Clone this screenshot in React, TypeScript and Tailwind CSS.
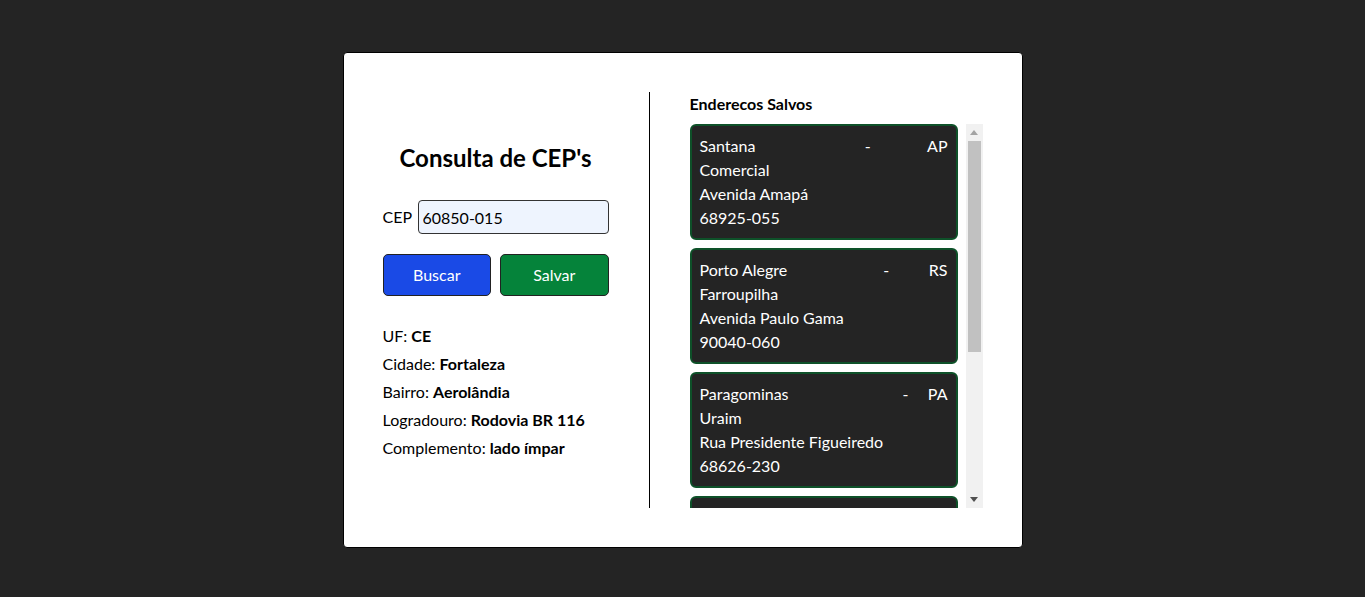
import React from "react";

type Endereco = { cidade: string; uf: string; bairro: string; logradouro: string; cep: string };

const enderecos: Endereco[] = [
  { cidade: "Santana", uf: "AP", bairro: "Comercial", logradouro: "Avenida Amapá", cep: "68925-055" },
  { cidade: "Porto Alegre", uf: "RS", bairro: "Farroupilha", logradouro: "Avenida Paulo Gama", cep: "90040-060" },
  { cidade: "Paragominas", uf: "PA", bairro: "Uraim", logradouro: "Rua Presidente Figueiredo", cep: "68626-230" },
];

function Card({ e }: { e: Endereco }) {
  return (
    <div className="shrink-0 bg-[#242424] border-2 border-[#0e5129] rounded-[6px] px-2 py-2 text-white text-[16px] leading-[24px]">
      <div className="grid grid-cols-[auto_auto_auto] justify-between">
        <span>{e.cidade}</span>
        <span>-</span>
        <span>{e.uf}</span>
        <span className="col-start-1">{e.bairro}</span>
        <span className="col-start-1">{e.logradouro}</span>
        <span className="col-start-1">{e.cep}</span>
      </div>
    </div>
  );
}

function Scrollbar() {
  return (
    <div className="w-[17px] h-full bg-[#f1f1f1] flex flex-col items-center">
      <div className="h-[17px] w-full flex items-center justify-center">
        <svg width="8" height="5" viewBox="0 0 8 5">
          <path d="M4 0 L8 5 L0 5 Z" fill="#a3a3a3" />
        </svg>
      </div>
      <div className="w-[13px] h-[211px] bg-[#c1c1c1]" />
      <div className="flex-1" />
      <div className="h-[17px] w-full flex items-center justify-center">
        <svg width="8" height="5" viewBox="0 0 8 5">
          <path d="M0 0 L8 0 L4 5 Z" fill="#505050" />
        </svg>
      </div>
    </div>
  );
}

export default function App() {
  return (
    <div
      className="min-h-screen bg-[#242424] flex justify-center pt-[52px]"
      style={{ fontFamily: "Lato, 'Noto Sans', sans-serif" }}
    >
      <div className="w-[680px] h-[496px] bg-white border border-black rounded-[4px] p-[39px] flex text-black">
        <div className="w-[226px] flex flex-col justify-center pt-[4px]">
          <h1 className="text-[24px] leading-[32px] font-bold text-center">Consulta de CEP's</h1>
          <div className="mt-[26px] flex items-center">
            <label className="text-[16px]">CEP</label>
            <input
              readOnly
              value="60850-015"
              className="ml-auto w-[191px] h-[34px] bg-[#eef4fe] border border-[#333] rounded-[4px] px-1 text-[16px] text-black outline-none"
              style={{ fontFamily: "Lato, 'Noto Sans', sans-serif" }}
            />
          </div>
          <div className="mt-5 flex gap-[9px]">
            <button className="flex-1 h-[42px] bg-[#1a4ae6] border border-[#222] rounded-[5px] text-white text-[16px]">
              Buscar
            </button>
            <button className="flex-1 h-[42px] bg-[#05833a] border border-[#222] rounded-[5px] text-white text-[16px]">
              Salvar
            </button>
          </div>
          <div className="mt-[26px] text-[16px] leading-[28px]">
            <p>
              UF: <b>CE</b>
            </p>
            <p>
              Cidade: <b>Fortaleza</b>
            </p>
            <p>
              Bairro: <b>Aerolândia</b>
            </p>
            <p>
              Logradouro: <b>Rodovia BR 116</b>
            </p>
            <p>
              Complemento: <b>lado ímpar</b>
            </p>
          </div>
        </div>
        <div className="w-px bg-black mx-10" />
        <div className="flex-1 flex flex-col min-w-0">
          <h3 className="text-[16px] leading-[24px] font-bold mb-2">Enderecos Salvos</h3>
          <div className="flex-1 flex min-h-0">
            <div className="flex-1 flex flex-col gap-2 overflow-hidden mr-2">
              {enderecos.map((e) => (
                <Card key={e.cep} e={e} />
              ))}
              <div className="shrink-0 h-[116px] bg-[#242424] border-2 border-[#0e5129] rounded-[6px]" />
            </div>
            <Scrollbar />
          </div>
        </div>
      </div>
    </div>
  );
}
